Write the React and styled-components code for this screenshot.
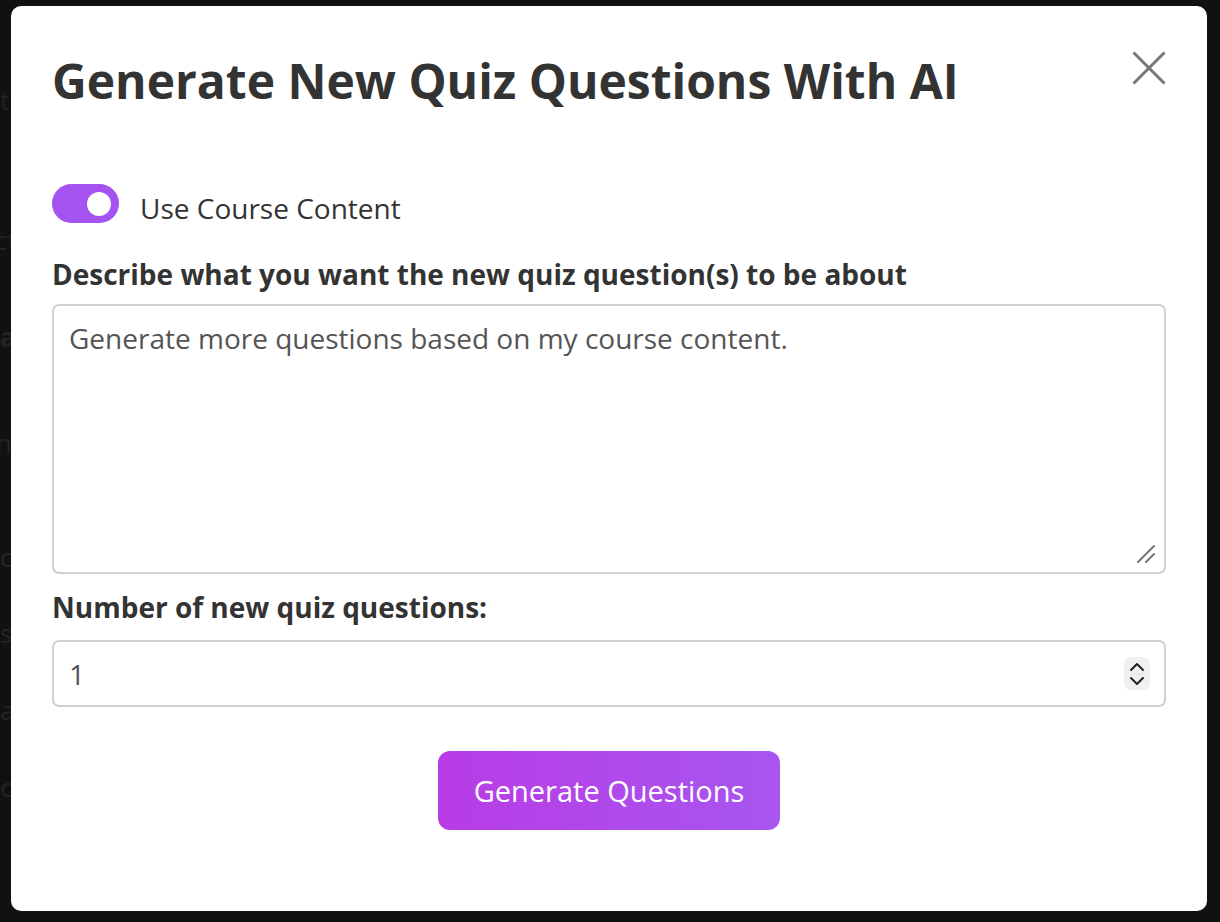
import React from 'react';
import styled, { createGlobalStyle } from 'styled-components';

const GlobalStyle = createGlobalStyle`
  html, body {
    margin: 0;
    padding: 0;
    background: #111111;
  }
  body {
    font-family: "Open Sans", "Noto Sans", sans-serif;
  }
`;

const Page = styled.div`
  position: relative;
  width: 1220px;
  height: 922px;
  overflow: hidden;
  background: #111111;
`;

const BackdropText = styled.div`
  display: flex;
  flex-direction: column;
  padding-top: 87px;
  font-size: 26px;
  color: #242424;
  line-height: 26px;
`;

const BackdropLine = styled.div`
  white-space: nowrap;
  margin-top: ${p => p.gap}px;
  margin-left: ${p => p.shift || 0}px;
  font-weight: ${p => (p.bold ? 700 : 400)};
`;

const Overlay = styled.div`
  position: absolute;
  inset: 0;
  display: flex;
  padding: 6px 13px 11px 11px;
`;

const Modal = styled.div`
  flex: 1;
  background: #ffffff;
  border-radius: 10px;
  padding: 45px 41px 0 41px;
  display: flex;
  flex-direction: column;
  color: #333333;
`;

const Header = styled.div`
  display: flex;
  justify-content: space-between;
  align-items: flex-start;
`;

const Title = styled.h1`
  margin: 8px 0 0 0;
  font-size: 48px;
  line-height: 44px;
  font-weight: 700;
  color: #333333;
`;

const CloseButton = styled.button`
  width: 34px;
  height: 34px;
  padding: 0;
  border: none;
  background: none;
  cursor: pointer;
  color: #777777;
`;

const ToggleRow = styled.label`
  display: flex;
  align-items: center;
  margin-top: 81px;
  gap: 21px;
  font-size: 28px;
  color: #333333;
`;

const ToggleText = styled.span`
  line-height: 30px;
  padding-top: 8px;
`;

const Track = styled.span`
  display: flex;
  align-items: center;
  justify-content: ${p => (p.on ? 'flex-end' : 'flex-start')};
  width: 67px;
  height: 39px;
  box-sizing: border-box;
  padding: 0 8px;
  border-radius: 20px;
  background: ${p => (p.on ? '#a453f0' : '#cccccc')};
`;

const Knob = styled.span`
  width: 24px;
  height: 24px;
  border-radius: 50%;
  background: #ffffff;
`;

const FieldLabel = styled.div`
  margin-top: ${p => p.top}px;
  font-size: 28px;
  line-height: 36px;
  font-weight: 700;
  color: #333333;
`;

const TextAreaWrap = styled.div`
  position: relative;
  margin-top: 12px;
  display: flex;
`;

const TextArea = styled.textarea`
  flex: 1;
  height: 270px;
  box-sizing: border-box;
  border: 2px solid #d0d0d0;
  border-radius: 7px;
  padding: 14px 15px;
  font-family: "Open Sans", "Noto Sans", sans-serif;
  font-size: 28px;
  line-height: 36px;
  color: #555555;
  resize: none;
  outline: none;
`;

const ResizeGrip = styled.svg`
  position: absolute;
  right: 10px;
  bottom: 10px;
  pointer-events: none;
`;

const NumberBox = styled.div`
  margin-top: 15px;
  height: 67px;
  box-sizing: border-box;
  border: 2px solid #d0d0d0;
  border-radius: 7px;
  display: flex;
  align-items: center;
  padding: 0 14px 0 15px;
`;

const NumberValue = styled.input`
  flex: 1;
  border: none;
  outline: none;
  padding: 0;
  font-family: "Open Sans", "Noto Sans", sans-serif;
  font-size: 28px;
  color: #555555;
  background: transparent;
`;

const Stepper = styled.span`
  width: 26px;
  height: 33px;
  border-radius: 7px;
  background: #f0f0f0;
  display: flex;
  flex-direction: column;
  align-items: center;
  justify-content: center;
`;

const Footer = styled.div`
  display: flex;
  justify-content: center;
  margin-top: 44px;
`;

const GenerateButton = styled.button`
  width: 342px;
  height: 79px;
  border: none;
  border-radius: 12px;
  background: linear-gradient(90deg, #b83ce6 0%, #a756ef 100%);
  color: #ffffff;
  font-family: "Open Sans", "Noto Sans", sans-serif;
  font-size: 29px;
  font-weight: 500;
  cursor: pointer;
`;

const backdrop = [
  { t: 't the topic of the lesson', gap: 0 },
  { t: 'ct the key ideas covered here', gap: 114, shift: -5 },
  { t: 'a short summary', gap: 71, bold: true },
  { t: 'nce of the main concepts', gap: 80, shift: -4 },
  { t: 'c examples from the chapter', gap: 88 },
  { t: 's and practice exercises', gap: 50 },
  { t: 'a review of the material', gap: 51 },
  { t: 'c questions for the learners', gap: 51 },
];

export default function App() {
  return (
    <Page>
      <GlobalStyle />
      <BackdropText>
        {backdrop.map((l, i) => (
          <BackdropLine key={i} gap={l.gap} shift={l.shift} bold={l.bold}>{l.t}</BackdropLine>
        ))}
      </BackdropText>
      <Overlay>
        <Modal>
          <Header>
            <Title>Generate New Quiz Questions With AI</Title>
            <CloseButton aria-label="Close">
              <svg width="34" height="34" viewBox="0 0 34 34" fill="none">
                <path d="M1.5 1.5 L32.5 32.5 M32.5 1.5 L1.5 32.5" stroke="currentColor" strokeWidth="3" />
              </svg>
            </CloseButton>
          </Header>
          <ToggleRow>
            <Track on>
              <Knob />
            </Track>
            <ToggleText>Use Course Content</ToggleText>
          </ToggleRow>
          <FieldLabel top={33}>Describe what you want the new quiz question(s) to be about</FieldLabel>
          <TextAreaWrap>
            <TextArea defaultValue="Generate more questions based on my course content." />
            <ResizeGrip width="20" height="20" viewBox="0 0 20 20" fill="none">
              <path d="M2 18 L18 2 M10 18 L18 10" stroke="#777777" strokeWidth="2" strokeLinecap="round" />
            </ResizeGrip>
          </TextAreaWrap>
          <FieldLabel top={15}>Number of new quiz questions:</FieldLabel>
          <NumberBox>
            <NumberValue type="text" defaultValue="1" />
            <Stepper>
              <svg width="16" height="26" viewBox="0 0 16 26" fill="none">
                <path d="M2 9 L8 3 L14 9" stroke="#222" strokeWidth="2" strokeLinecap="round" strokeLinejoin="round" />
                <path d="M2 13 H14" stroke="#dddddd" strokeWidth="1" />
                <path d="M2 17 L8 23 L14 17" stroke="#222" strokeWidth="2" strokeLinecap="round" strokeLinejoin="round" />
              </svg>
            </Stepper>
          </NumberBox>
          <Footer>
            <GenerateButton>Generate Questions</GenerateButton>
          </Footer>
        </Modal>
      </Overlay>
    </Page>
  );
}
